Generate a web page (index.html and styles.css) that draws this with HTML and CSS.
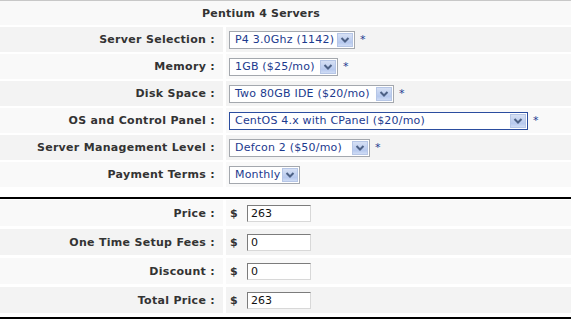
FILE: index.html
```html
<!DOCTYPE html>
<html>
<head>
<meta charset="utf-8">
<link rel="stylesheet" href="styles.css">
</head>
<body>
<div class="form">
  <div class="section config">
    <div class="row title odd"><span class="title-text">Pentium 4 Servers</span></div>

    <div class="label even">Server Selection :</div>
    <div class="value even"><span class="select w-ss"><span class="sel-text">P4 3.0Ghz (1142)</span><span class="arrow"><svg width="10" height="8" viewBox="0 0 10 8"><path d="M1.5 2 L5 5.5 L8.5 2" fill="none" stroke="#4d6185" stroke-width="2"/></svg></span></span><span class="req">*</span></div>

    <div class="label odd">Memory :</div>
    <div class="value odd"><span class="select w-mem"><span class="sel-text">1GB ($25/mo)</span><span class="arrow"><svg width="10" height="8" viewBox="0 0 10 8"><path d="M1.5 2 L5 5.5 L8.5 2" fill="none" stroke="#4d6185" stroke-width="2"/></svg></span></span><span class="req">*</span></div>

    <div class="label even">Disk Space :</div>
    <div class="value even"><span class="select w-disk"><span class="sel-text">Two 80GB IDE ($20/mo)</span><span class="arrow"><svg width="10" height="8" viewBox="0 0 10 8"><path d="M1.5 2 L5 5.5 L8.5 2" fill="none" stroke="#4d6185" stroke-width="2"/></svg></span></span><span class="req">*</span></div>

    <div class="label odd">OS and Control Panel :</div>
    <div class="value odd"><span class="select focused w-os"><span class="sel-text">CentOS 4.x with CPanel ($20/mo)</span><span class="arrow"><svg width="10" height="8" viewBox="0 0 10 8"><path d="M1.5 2 L5 5.5 L8.5 2" fill="none" stroke="#4d6185" stroke-width="2"/></svg></span></span><span class="req">*</span></div>

    <div class="label even">Server Management Level :</div>
    <div class="value even"><span class="select w-mgmt"><span class="sel-text">Defcon 2 ($50/mo)</span><span class="arrow"><svg width="10" height="8" viewBox="0 0 10 8"><path d="M1.5 2 L5 5.5 L8.5 2" fill="none" stroke="#4d6185" stroke-width="2"/></svg></span></span><span class="req">*</span></div>

    <div class="label odd">Payment Terms :</div>
    <div class="value odd"><span class="select w-pay"><span class="sel-text">Monthly</span><span class="arrow"><svg width="10" height="8" viewBox="0 0 10 8"><path d="M1.5 2 L5 5.5 L8.5 2" fill="none" stroke="#4d6185" stroke-width="2"/></svg></span></span></div>
  </div>

  <div class="section totals">
    <div class="label odd">Price :</div>
    <div class="value odd"><span class="cur">$</span><span class="input">263</span></div>

    <div class="label even">One Time Setup Fees :</div>
    <div class="value even"><span class="cur">$</span><span class="input">0</span></div>

    <div class="label odd">Discount :</div>
    <div class="value odd"><span class="cur">$</span><span class="input">0</span></div>

    <div class="label even">Total Price :</div>
    <div class="value even"><span class="cur">$</span><span class="input">263</span></div>
  </div>
</div>
</body>
</html>
```

FILE: styles.css
```css
html, body {
  margin: 0;
  padding: 0;
  background: #ffffff;
}

body {
  font-family: "DejaVu Sans", Verdana, sans-serif;
  font-size: 11px;
  color: #333333;
  width: 571px;
  height: 320px;
  overflow: hidden;
}

.form {
  border-top: 1px solid #c8c8c8;
}

.section {
  display: grid;
  grid-template-columns: 223px 345px;
  column-gap: 3px;
}

.config {
  grid-template-rows: 24px repeat(6, 25px);
  row-gap: 2px;
}

.totals {
  margin-top: 10px;
  border-top: 2px solid #000000;
  border-bottom: 2px solid #000000;
  padding: 1px 0 4px;
  grid-template-rows: repeat(4, 26px);
  row-gap: 3px;
}

.odd { background: #f9f9f9; }
.even { background: #f3f3f3; }

.title {
  grid-column: 1 / span 2;
  display: flex;
  align-items: center;
  justify-content: center;
  padding-right: 49px;
  font-weight: bold;
  letter-spacing: 0.2px;
  color: #333333;
}

.label {
  display: flex;
  align-items: center;
  justify-content: flex-end;
  padding-right: 8px;
  font-weight: bold;
  letter-spacing: 0.3px;
  color: #333333;
  white-space: nowrap;
}

.value {
  display: flex;
  align-items: center;
  padding-left: 3px;
  white-space: nowrap;
}

.select {
  box-sizing: border-box;
  display: flex;
  align-items: center;
  height: 18px;
  border: 1px solid #a4a8ae;
  background: #ffffff;
  color: #1c3a8e;
  padding: 1px;
}

.select.focused {
  border-color: #2b4d9f;
}

.sel-text {
  flex: 1;
  padding-left: 4px;
  line-height: 14px;
  letter-spacing: 0.2px;
  overflow: hidden;
}

.arrow {
  box-sizing: border-box;
  width: 16px;
  height: 14px;
  display: flex;
  align-items: center;
  justify-content: center;
  border: 1px solid #b6c6e6;
  background: linear-gradient(#d6e0f4, #b7c9ee 70%, #cfdcf5);
}

.arrow svg { display: block; }

.w-ss { width: 126px; }
.w-mem { width: 109px; }
.w-disk { width: 165px; }
.w-os { width: 299px; }
.w-mgmt { width: 141px; }
.w-pay { width: 71px; }

.req {
  margin-left: 5px;
  color: #1c3a8e;
}

.cur {
  width: 17px;
  padding-left: 1px;
  font-weight: bold;
  color: #333333;
}

.input {
  box-sizing: border-box;
  width: 64px;
  height: 17px;
  border-style: solid;
  border-width: 1px;
  border-color: #7c7c7c #d8d8d8 #d8d8d8 #7c7c7c;
  background: #ffffff;
  color: #111111;
  padding-left: 3px;
  line-height: 15px;
  font-size: 11px;
}
```
